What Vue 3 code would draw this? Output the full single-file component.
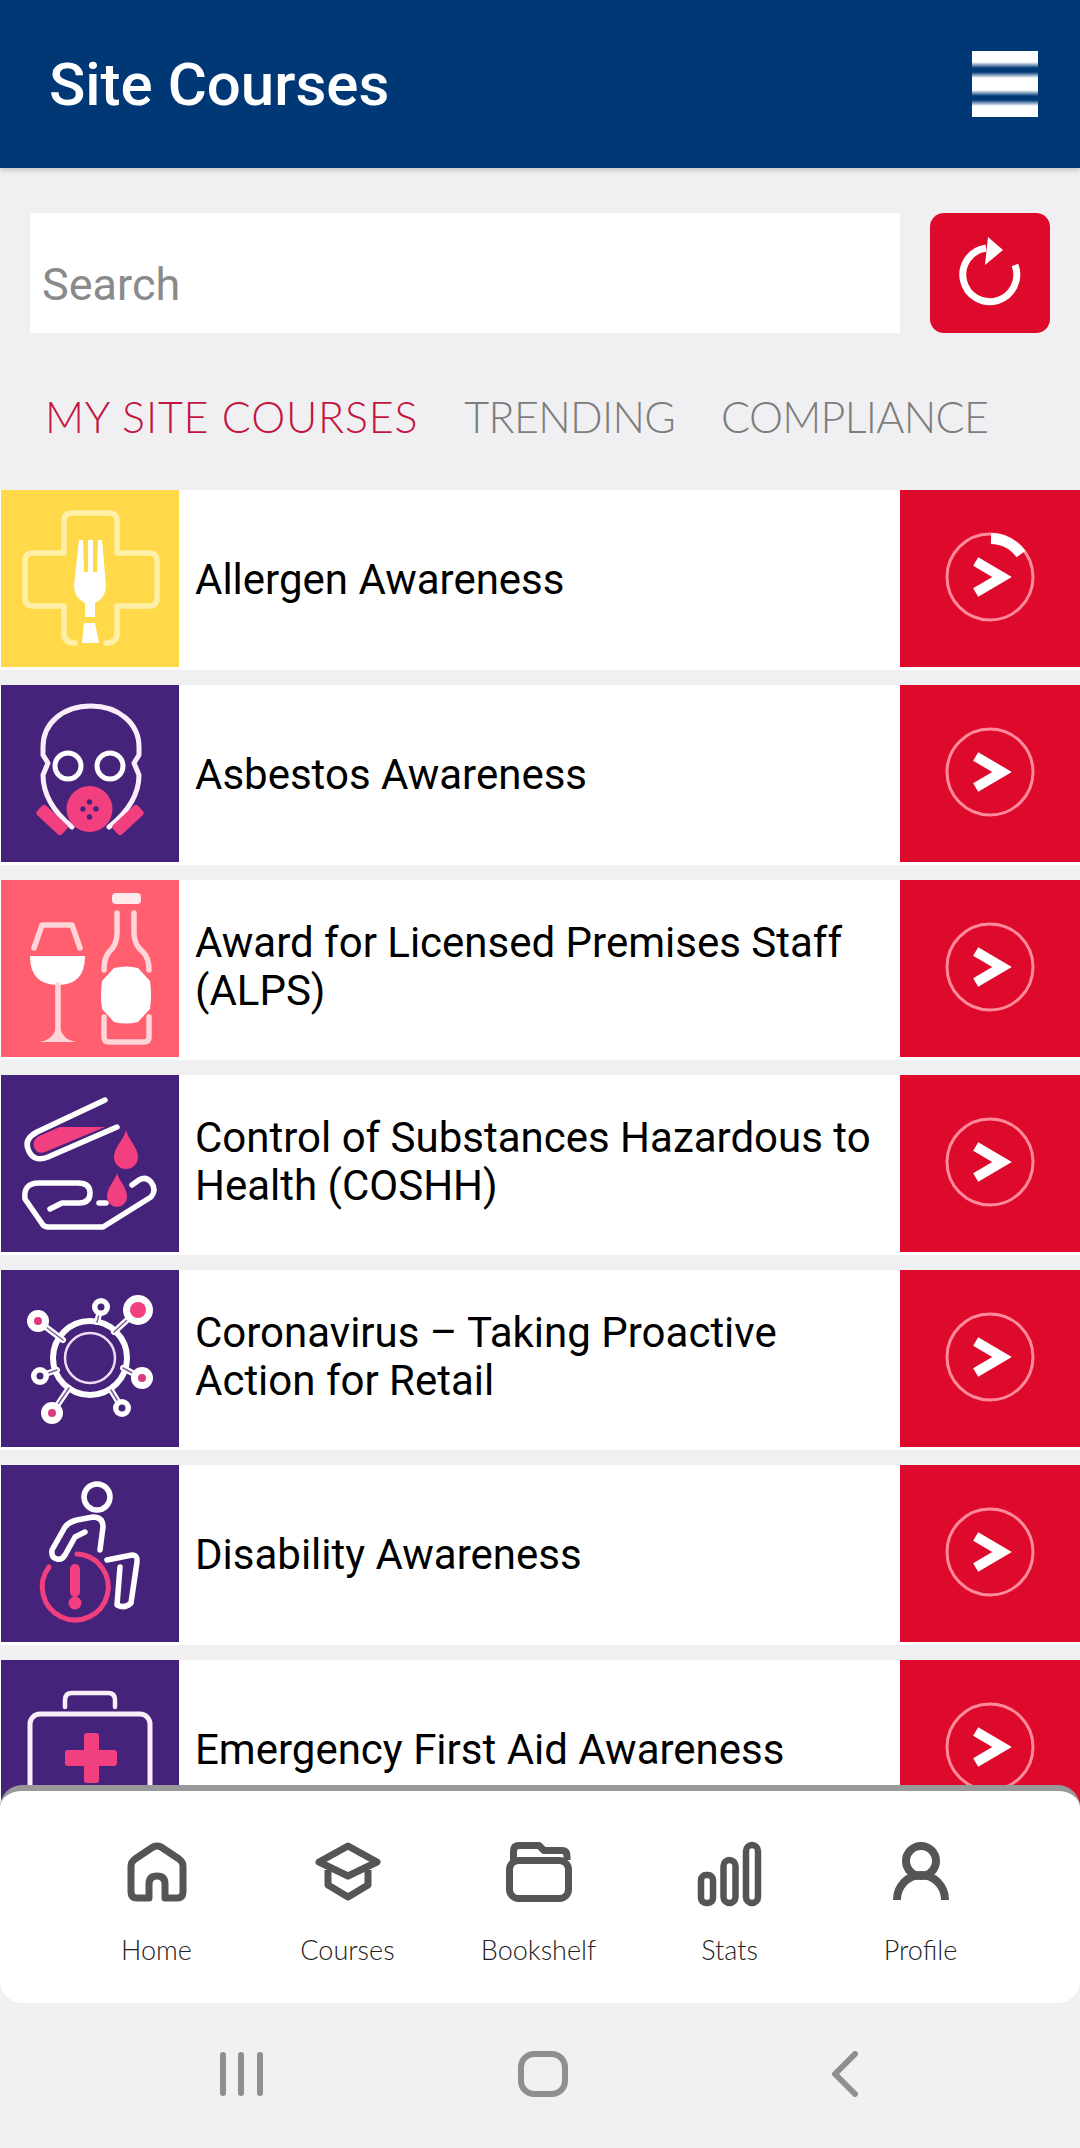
<script setup>
const courses = [
  { id: 1, icon: "allergen", bg: "#ffd94a", title: "Allergen Awareness", progress: true },
  { id: 2, icon: "mask", bg: "#45237a", title: "Asbestos Awareness" },
  { id: 3, icon: "drinks", bg: "#ff5f6e", title: "Award for Licensed Premises Staff (ALPS)" },
  { id: 4, icon: "coshh", bg: "#45237a", title: "Control of Substances Hazardous to Health (COSHH)" },
  { id: 5, icon: "virus", bg: "#45237a", title: "Coronavirus – Taking Proactive Action for Retail" },
  { id: 6, icon: "disability", bg: "#45237a", title: "Disability Awareness" },
  { id: 7, icon: "firstaid", bg: "#45237a", title: "Emergency First Aid Awareness" },
];

const spikes = [
  { x: 100, y: 37, r: 9, from: [96, 52], dot: 3.5, fill: "#45237a" },
  { x: 137, y: 40, r: 15, from: [113, 62], dot: 8, fill: "#f23f7f" },
  { x: 37, y: 51, r: 11, from: [62, 70], dot: 4, fill: "#d93a80" },
  { x: 39, y: 106, r: 9, from: [56, 100], dot: 3.5, fill: "#45237a" },
  { x: 51, y: 143, r: 11, from: [68, 118], dot: 4, fill: "#d93a80" },
  { x: 121, y: 138, r: 9, from: [110, 120], dot: 3.5, fill: "#45237a" },
  { x: 141, y: 108, r: 11, from: [122, 98], dot: 4, fill: "#d93a80" },
];
</script>

<template>
  <div class="screen">
    <header class="topbar">
      <h1>Site Courses</h1>
      <div class="burger"></div>
    </header>

    <main class="content">
      <div class="search-row">
        <div class="search">Search</div>
        <button class="refresh">
          <svg viewBox="0 0 120 120" width="120" height="120">
            <path d="M56 35 A27 27 0 1 0 85 52" fill="none" stroke="#fff" stroke-width="7" />
            <path d="M58 24 L73 37 L55 52 Z" fill="#fff" />
          </svg>
        </button>
      </div>

      <nav class="tabs">
        <span class="active">MY SITE COURSES</span>
        <span>TRENDING</span>
        <span>COMPLIANCE</span>
      </nav>

      <div class="list">
        <div class="row" v-for="course in courses" :key="course.id">
          <div class="thumb" :style="{ background: course.bg }">
            <svg viewBox="0 0 178 177" width="178" height="177" fill="none" stroke-linecap="round" stroke-linejoin="round">
              <g v-if="course.icon === 'allergen'">
                <path d="M74 153 Q63 153 63 143 V116 H32 Q24 116 24 108 V71 Q24 63 32 63 H63 V31 Q63 23 71 23 H108 Q116 23 116 31 V63 H148 Q156 63 156 71 V108 Q156 116 148 116 H116 V143 Q116 153 105 153" stroke="#fff0a8" stroke-width="5.500" />
                <path d="M78 50 H82 L83 82 H87 V50 H92 V82 H96 L97 50 H101 L105 95 Q105 108 94 113 V127 H84 V113 Q73 108 73 95 Z" fill="#fff" />
                <path d="M83 133 H94 L98 153 H81 Z" fill="#fff" />
              </g>
              <g v-else-if="course.icon === 'mask'">
                <path d="M71 142 Q42 118 42 90 L47 78 L42 70 V62 C42 38 62 21 90 21 C117 21 138 38 138 62 V70 L133 78 L138 90 Q138 118 108 142" stroke="#fbeefb" stroke-width="5" />
                <circle cx="67" cy="81" r="13" stroke="#fff" stroke-width="5" />
                <circle cx="109" cy="81" r="13" stroke="#fff" stroke-width="5" />
                <rect x="34" y="128.500" width="34" height="13" rx="3" fill="#f23f7f" transform="rotate(43 51 135)" />
                <rect x="110" y="128.500" width="34" height="13" rx="3" fill="#f23f7f" transform="rotate(-43 127 135)" />
                <circle cx="88.500" cy="124" r="23" fill="#f23f7f" />
                <circle cx="88.500" cy="117" r="2.700" fill="#45237a" />
                <circle cx="82" cy="124" r="2.700" fill="#45237a" />
                <circle cx="95" cy="124" r="2.700" fill="#45237a" />
                <circle cx="88.500" cy="132" r="2.700" fill="#45237a" />
              </g>
              <g v-else-if="course.icon === 'drinks'">
                <path d="M33 68 L41 45 H71 L79 68" stroke="#ffd5d8" stroke-width="5.500" />
                <path d="M29 76 H84 Q84 105 57 105 Q29 105 29 76 Z" fill="#fff" />
                <path d="M57 105 V158" stroke="#ffd5d8" stroke-width="5.500" />
                <path d="M38 162 Q52 160 55 148 H59 Q62 160 75 162 Z" fill="#ffd5d8" />
                <rect x="111" y="13" width="29" height="11" rx="4" fill="#ffe9ea" />
                <path d="M116 33 V53 Q116 65 108 72 Q103 78 103 90" stroke="#ffd5d8" stroke-width="5.500" />
                <path d="M133 33 V53 Q133 65 142 72 Q148 78 148 90" stroke="#ffd5d8" stroke-width="5.500" />
                <path d="M113 88 Q125 85 137 88 L149 101 Q151 115 149 129 L137 142 Q125 145 113 142 L101 129 Q99 115 101 101 Z" fill="#fff" />
                <path d="M103 137 V157 Q103 162 108 162 H143 Q148 162 148 157 V137" stroke="#ffd5d8" stroke-width="5.500" />
              </g>
              <g v-else-if="course.icon === 'coshh'">
                <path d="M59 52 H104 L44 77 Q36 80 33 72 Q31 65 38 61 Z" fill="#f23f7f" />
                <path d="M104 25 L36 57 Q23 64 27 74 Q32 88 47 82 L116 52" stroke="#fff" stroke-width="5.500" />
                <path d="M125 55 C127 65 137 72 137 82 A12 12 0 0 1 113 82 C113 72 123 65 125 55 Z" fill="#f23f7f" />
                <path d="M49 134 L61 128 H78 Q89 128 89 118 Q89 108 77 108 H38 Q22 108 24 124 L42 150 Q44 152 48 152 H102 L150 122 Q156 115 150 107 Q145 101 138 105 L131 110" stroke="#fff" stroke-width="5.500" />
                <path d="M98 128 H105" stroke="#fff" stroke-width="5.500" />
                <path d="M116 98 C118 106 126 112 126 122 A10 10 0 0 1 106 122 C106 112 114 106 116 98 Z" fill="#f23f7f" />
              </g>
              <g v-else-if="course.icon === 'virus'">
                <circle cx="89" cy="88" r="37" stroke="#fff" stroke-width="6" />
                <circle cx="89" cy="88" r="25" stroke="#eedcf5" stroke-width="2.500" />
                <g v-for="s in spikes" :key="s.x">
                  <path :d="`M${s.from[0]} ${s.from[1]} L${s.x} ${s.y}`" stroke="#fff" stroke-width="6" />
                  <path :d="`M${s.from[0]} ${s.from[1]} L${s.x} ${s.y}`" stroke="#7b5aa0" stroke-width="1.500" />
                  <circle :cx="s.x" :cy="s.y" :r="s.r" fill="#fff" />
                  <circle :cx="s.x" :cy="s.y" :r="s.dot" :fill="s.fill" />
                </g>
              </g>
              <g v-else-if="course.icon === 'disability'">
                <circle cx="96" cy="32" r="13" stroke="#fff" stroke-width="5.500" />
                <path d="M99 85 L102 62 Q102 52 92 52 L76 55 Q68 57 64 62 L51 85 Q50 93 56 94 Q61 95 64 90 L74 72 L84 67" stroke="#fff" stroke-width="5.500" />
                <path d="M106 95 L131 90 Q137 90 136 97 L130 138 Q124 144 116 140 L119 102" stroke="#fff" stroke-width="5.500" />
                <path d="M76 89 A33 33 0 1 1 48 102" stroke="#f23f7f" stroke-width="5" />
                <path d="M74 104 V127" stroke="#f23f7f" stroke-width="10" />
                <circle cx="74" cy="138" r="6.500" fill="#f23f7f" />
              </g>
              <g v-else>
                <path d="M64 47 V40 Q64 33 71 33 H107 Q114 33 114 40 V47" stroke="#fbeefb" stroke-width="4.500" />
                <rect x="29" y="54" width="120" height="101" rx="10" stroke="#fbeefb" stroke-width="5" />
                <path d="M83 76 Q83 73 86 73 H95 Q98 73 98 76 V90 H113 Q116 90 116 93 V103 Q116 106 113 106 H98 V120 Q98 123 95 123 H86 Q83 123 83 120 V106 H67 Q64 106 64 103 V93 Q64 90 67 90 H83 Z" fill="#f23f7f" />
              </g>
            </svg>
          </div>
          <p class="title" :class="{ short: course.title.length < 32 }">{{ course.title }}</p>
          <div class="go">
            <svg viewBox="0 0 180 177" width="180" height="177" fill="none">
              <circle cx="90" cy="87" r="43" stroke="#ff8a9c" stroke-width="3" />
              <path v-if="course.progress" d="M91 48.500 A38.500 38.500 0 0 1 121 64" stroke="#fff" stroke-width="11" />
              <path d="M80 74 L102 87 L80 100" stroke="#fff" stroke-width="10" stroke-linecap="square" />
            </svg>
          </div>
        </div>
      </div>
    </main>

    <footer class="bottom-nav">
      <div class="nav-item">
        <svg viewBox="0 0 60 60" width="60" height="60" fill="none" stroke="#555" stroke-width="7" stroke-linejoin="round">
          <path d="M22 56 H10 Q4 56 4 50 V24 Q4 20 8 17 L26 5 Q30 3 34 5 L52 17 Q56 20 56 24 V50 Q56 56 50 56 H38 V42 Q38 34 30 34 Q22 34 22 42 Z" />
        </svg>
        <span>Home</span>
      </div>
      <div class="nav-item">
        <svg viewBox="0 0 68 60" width="68" height="60" fill="none" stroke="#555" stroke-width="7" stroke-linejoin="round">
          <path d="M34 4 L63 20 L34 34 L5 20 Z" />
          <path d="M14 28 V43 L34 55 L54 43 V28" />
        </svg>
        <span>Courses</span>
      </div>
      <div class="nav-item">
        <svg viewBox="0 0 66 60" width="66" height="60" fill="none" stroke="#555" stroke-width="7" stroke-linejoin="round">
          <path d="M7.500 18 V9 Q7.500 3.500 13 3.500 H33 L38 8.500 H56 Q61 8.500 61 14 V18" />
          <rect x="3.500" y="18.500" width="59" height="38" rx="9" />
        </svg>
        <span>Bookshelf</span>
      </div>
      <div class="nav-item">
        <svg viewBox="0 0 64 60" width="64" height="60" fill="none" stroke="#555" stroke-width="6.500" style="overflow: visible">
          <rect x="3" y="33" width="12" height="28" rx="5" />
          <rect x="25.500" y="18" width="12" height="43" rx="6" />
          <rect x="48" y="3" width="12" height="58" rx="6" />
        </svg>
        <span>Stats</span>
      </div>
      <div class="nav-item">
        <svg viewBox="0 0 56 60" width="56" height="60" fill="none" stroke="#555" stroke-width="8">
          <circle cx="28" cy="19" r="15" />
          <path d="M4 58 A24 25 0 0 1 52 58" />
        </svg>
        <span>Profile</span>
      </div>
    </footer>

    <div class="system-nav">
      <svg class="sys-recent" viewBox="0 0 44 44" width="44" height="44" fill="#8f8f8f">
        <rect x="0" y="0" width="6" height="44" rx="3" />
        <rect x="18" y="0" width="6" height="44" rx="3" />
        <rect x="37" y="0" width="6" height="44" rx="3" />
      </svg>
      <svg class="sys-home" viewBox="0 0 50 46" width="50" height="46" fill="none" stroke="#8f8f8f" stroke-width="6">
        <rect x="3" y="3" width="44" height="40" rx="13" />
      </svg>
      <svg class="sys-back" viewBox="0 0 26 46" width="26" height="46" fill="none" stroke="#8f8f8f" stroke-width="6" stroke-linecap="round" stroke-linejoin="round">
        <path d="M23 3 L3 23 L23 43" />
      </svg>
    </div>
  </div>
</template>

<style scoped>
.screen {
  width: 1080px;
  height: 2148px;
  display: flex;
  flex-direction: column;
  overflow: hidden;
  background: #f0f0f2;
  font-family: Roboto, sans-serif;
}

.topbar {
  height: 168px;
  flex-shrink: 0;
  background: #003876;
  color: #fff;
  display: flex;
  justify-content: space-between;
  padding: 51px 42px 0 49px;
  box-sizing: border-box;
  box-shadow: 0 2px 5px rgba(0, 0, 0, 0.2);
  position: relative;
  z-index: 1;
}

.topbar h1 {
  margin: 0;
  font-size: 60px;
  font-weight: 500;
  line-height: 68px;
}

.burger {
  width: 66px;
  height: 66px;
  background: linear-gradient(
    to bottom,
    #fff 0,
    #fff 11px,
    #003876 17px,
    #003876 21px,
    #fff 27px,
    #fff 39px,
    #003876 45px,
    #003876 49px,
    #fff 55px,
    #fff 66px
  );
}

.content {
  flex: 1;
  min-height: 0;
  overflow: hidden;
}

.search-row {
  display: flex;
  gap: 30px;
  padding: 45px 30px 0;
}

.search {
  flex: 1;
  height: 120px;
  background: #fff;
  color: #8a8a8a;
  font-size: 45px;
  line-height: 144px;
  padding-left: 12px;
  box-sizing: border-box;
}

.refresh {
  width: 120px;
  height: 120px;
  padding: 0;
  border: none;
  border-radius: 14px;
  background: #dd0a2b;
}

.refresh svg {
  display: block;
}

.tabs {
  display: flex;
  gap: 46px;
  padding: 59px 0 48px 45px;
  font-family: Lato, sans-serif;
  font-weight: 300;
  font-size: 43px;
  line-height: 50px;
  color: #7d7d7d;
  letter-spacing: -0.7px;
}

.tabs .active {
  color: #c2163f;
  letter-spacing: 0.8px;
}

.list {
  display: flex;
  flex-direction: column;
  gap: 15px;
}

.row {
  display: flex;
  align-items: flex-start;
  height: 180px;
  flex-shrink: 0;
  background: #fff;
}

.thumb {
  width: 178px;
  height: 177px;
  margin-left: 1px;
  flex-shrink: 0;
}

.thumb svg,
.go svg {
  display: block;
}

.title {
  flex: 1;
  margin: 0;
  height: 177px;
  display: flex;
  align-items: center;
  padding: 0 16px 3px;
  box-sizing: border-box;
  font-size: 42px;
  line-height: 48px;
  color: #000;
}

.title.short {
  padding: 3px 16px 0;
}

.go {
  width: 180px;
  height: 177px;
  flex-shrink: 0;
  background: #dd0a2b;
}

.bottom-nav {
  height: 218px;
  flex-shrink: 0;
  margin-top: -20px;
  position: relative;
  background: #fff;
  border-top: 6px solid #999;
  border-radius: 22px;
  box-sizing: border-box;
  display: flex;
  justify-content: center;
  padding: 51px 3px 0 0;
}

.nav-item {
  width: 191px;
  display: flex;
  flex-direction: column;
  align-items: center;
  gap: 33px;
  font-family: Lato, sans-serif;
  font-weight: 300;
  font-size: 27px;
  line-height: 30px;
  color: #222;
}

.nav-item svg {
  display: block;
}

.system-nav {
  height: 145px;
  flex-shrink: 0;
  display: flex;
  align-items: center;
  padding-bottom: 4px;
  box-sizing: border-box;
  position: relative;
  background: #f1f1f1;
}

.sys-recent {
  margin-left: 220px;
}

.sys-home {
  margin-left: 254px;
}

.sys-back {
  margin-left: 264px;
}
</style>
